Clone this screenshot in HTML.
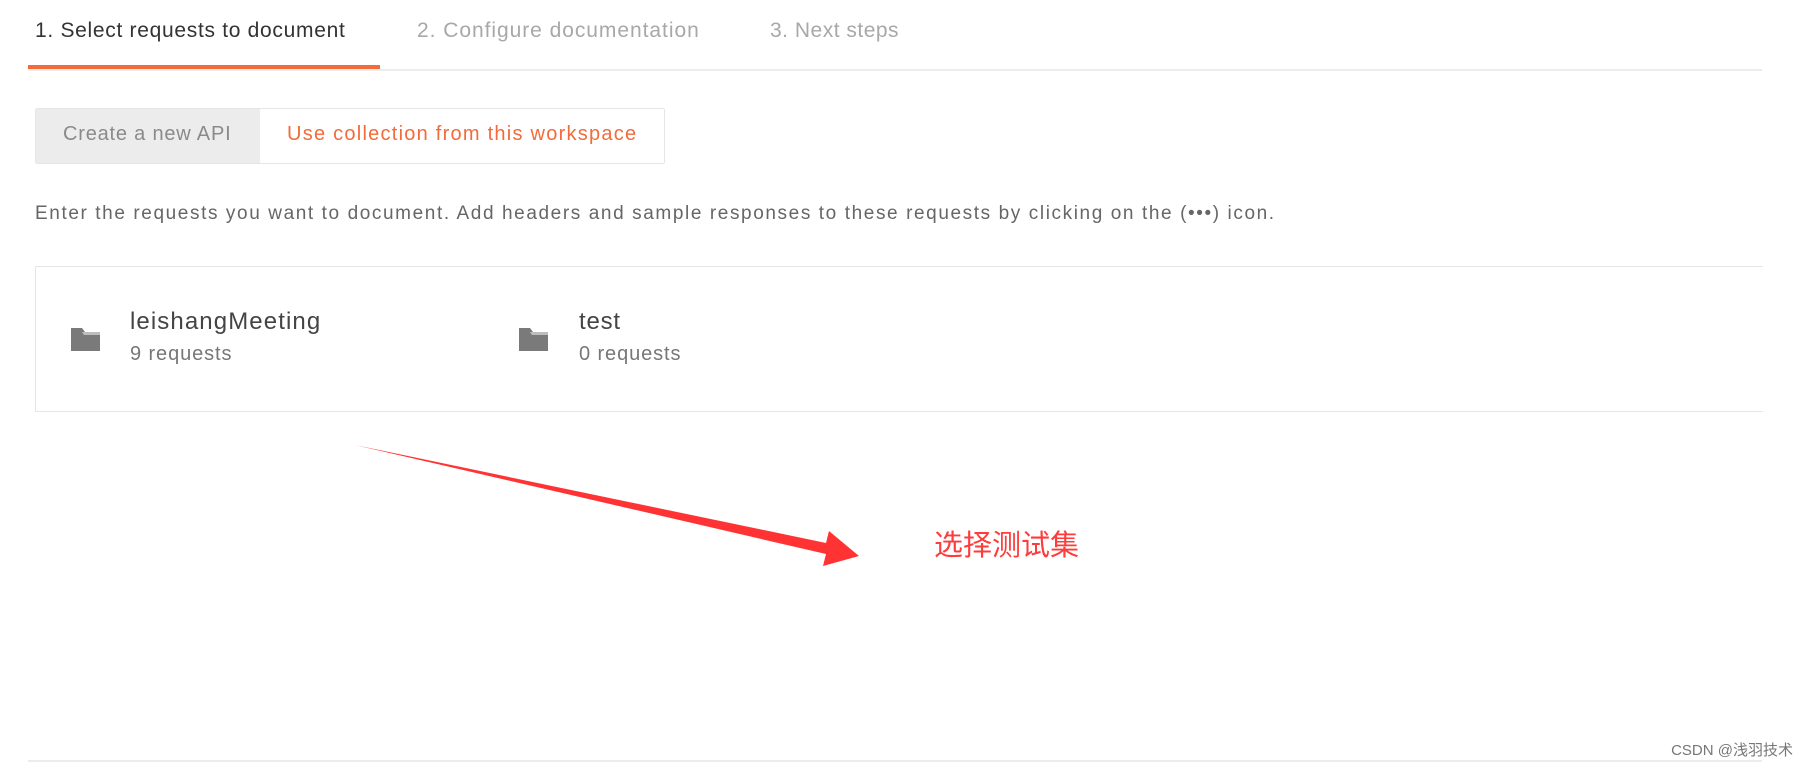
<!DOCTYPE html>
<html><head><meta charset="utf-8"><style>
body{margin:0;width:1808px;height:768px;background:#fff;position:relative;overflow:hidden;font-family:"Liberation Sans","Noto Sans CJK SC",sans-serif;}
.a{position:absolute;white-space:nowrap;}
</style></head><body>
<div class="a" style="left:35px;top:19px;font-size:21px;letter-spacing:0.7px;color:#333">1. Select requests to document</div>
<div class="a" style="left:417px;top:19px;font-size:21px;letter-spacing:0.95px;color:#a8a8a8">2. Configure documentation</div>
<div class="a" style="left:770px;top:19px;font-size:21px;letter-spacing:0.5px;color:#a8a8a8">3. Next steps</div>
<div class="a" style="left:28px;top:69px;width:1734px;height:2px;background:#ececec"></div>
<div class="a" style="left:28px;top:65px;width:352px;height:4px;background:#f26b3a"></div>

<div class="a" style="left:35px;top:108px;width:628px;height:54px;border:1px solid #e6e6e6;border-radius:2px"></div>
<div class="a" style="left:36px;top:109px;width:224px;height:54px;background:#ececec"></div>
<div class="a" style="left:63px;top:123px;font-size:20px;letter-spacing:0.8px;color:#8a8a8a">Create a new API</div>
<div class="a" style="left:287px;top:123px;font-size:20px;letter-spacing:1.25px;color:#f26b3a">Use collection from this workspace</div>

<div class="a" style="left:35px;top:203px;font-size:19px;letter-spacing:1.6px;color:#666">Enter the requests you want to document. Add headers and sample responses to these requests by clicking on the (•••) icon.</div>

<div class="a" style="left:35px;top:266px;width:1727px;height:144px;border:1px solid #e6e6e6;border-right:none"></div>
<svg class="a" style="left:71px;top:328px" width="30" height="24" viewBox="0 0 30 24"><path d="M0 0H11L14 4H29V23H0Z" fill="#7a7a7a"/><path d="M11 4H29V7H13Z" fill="#fff" opacity=".5"/></svg>
<svg class="a" style="left:519px;top:328px" width="30" height="24" viewBox="0 0 30 24"><path d="M0 0H11L14 4H29V23H0Z" fill="#7a7a7a"/><path d="M11 4H29V7H13Z" fill="#fff" opacity=".5"/></svg>
<div class="a" style="left:130px;top:308px;font-size:24px;letter-spacing:1.1px;color:#444">leishangMeeting</div>
<div class="a" style="left:130px;top:343px;font-size:20px;letter-spacing:0.9px;color:#777">9 requests</div>
<div class="a" style="left:579px;top:308px;font-size:24px;letter-spacing:0.8px;color:#444">test</div>
<div class="a" style="left:579px;top:343px;font-size:20px;letter-spacing:0.9px;color:#777">0 requests</div>

<svg class="a" style="left:0;top:0" width="1808" height="768"><path d="M355 445 L826 543 L829 531 L859 556 L823 566 L826 554 Z" fill="#f33"/></svg>
<div class="a" style="left:934px;top:522px;font-size:29px;color:#ff3b3b">选择测试集</div>

<div class="a" style="left:28px;top:760px;width:1734px;height:2px;background:#ececec"></div>
<div class="a" style="right:15px;top:739px;font-size:15px;color:#777">CSDN @浅羽技术</div>
</body></html>
